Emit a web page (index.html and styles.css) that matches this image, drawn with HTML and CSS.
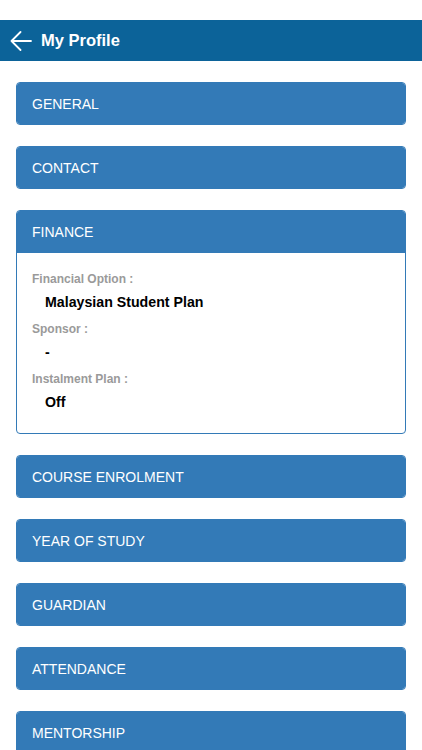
FILE: index.html
```html
<!DOCTYPE html>
<html>
<head>
<meta charset="utf-8">
<link rel="stylesheet" href="styles.css">
</head>
<body>
<div class="status"></div>
<header class="bar">
  <svg class="back" width="22" height="20" viewBox="0 0 22 20"><path d="M10.5 1 L1.5 10 L10.5 19 M1.5 10 H21" fill="none" stroke="#fff" stroke-width="1.8" stroke-linecap="round" stroke-linejoin="round"/></svg>
  <h1 class="title">My Profile</h1>
</header>
<main class="list">
  <section class="panel"><div class="head">GENERAL</div></section>
  <section class="panel"><div class="head">CONTACT</div></section>
  <section class="panel open">
    <div class="head">FINANCE</div>
    <div class="body">
      <div class="label">Financial Option :</div>
      <div class="value">Malaysian Student Plan</div>
      <div class="label">Sponsor :</div>
      <div class="value">-</div>
      <div class="label">Instalment Plan :</div>
      <div class="value">Off</div>
    </div>
  </section>
  <section class="panel"><div class="head">COURSE ENROLMENT</div></section>
  <section class="panel"><div class="head">YEAR OF STUDY</div></section>
  <section class="panel"><div class="head">GUARDIAN</div></section>
  <section class="panel"><div class="head">ATTENDANCE</div></section>
  <section class="panel"><div class="head">MENTORSHIP</div></section>
</main>
</body>
</html>
```
FILE: styles.css
```css
html, body { margin: 0; padding: 0; background: #fff; }
body { font-family: "Liberation Sans", Arial, sans-serif; overflow: hidden; height: 750px; }
.status { height: 20px; background: #fff; }
.bar { height: 41px; background: #0c6399; display: flex; align-items: center; padding-left: 10px; }
.back { display: block; margin-right: 9px; }
.title { margin: 0; color: #fff; font-size: 16.5px; font-weight: bold; }
.list { padding: 21px 16px 0; display: flex; flex-direction: column; gap: 21px; }
.panel { border: 1px solid #337ab7; border-radius: 4px; overflow: hidden; }
.head { background: #337ab7; color: #fff; font-size: 14px; height: 41px; line-height: 42px; padding-left: 15px; }
.open .head { border-bottom: 1px solid #337ab7; }
.body { padding: 18px 15px 22px; }
.label { color: #9a9a9a; font-size: 12px; font-weight: bold; line-height: 16px; }
.value { color: #000; font-size: 14.2px; font-weight: bold; padding-left: 13px; margin: 7px 0 10px; line-height: 17px; }
.value:last-child { margin-bottom: 0; }
```
